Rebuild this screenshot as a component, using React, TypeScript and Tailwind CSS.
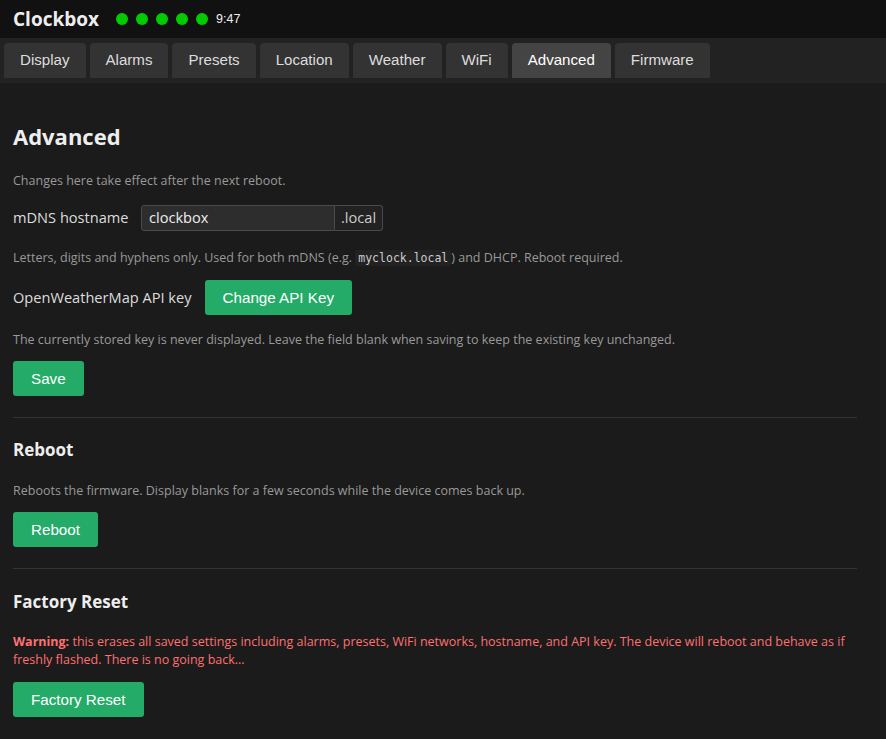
import React from "react";

const body = { fontFamily: '"Open Sans", "Noto Sans", sans-serif' };
const arial = { fontFamily: '"Liberation Sans", Arial, sans-serif' };

const tabs = ["Display", "Alarms", "Presets", "Location", "Weather", "WiFi", "Advanced", "Firmware"];

function Btn({ children }: { children: React.ReactNode }) {
  return (
    <button
      style={arial}
      className="h-[35px] px-[18px] rounded-[3px] bg-[#23ab67] text-white text-[15.2px] leading-none"
    >
      {children}
    </button>
  );
}

export default function App() {
  return (
    <div className="min-h-[739px] bg-[#1b1b1b] text-[#ddd]" style={body}>
      <div className="h-[38px] bg-[#111] flex items-center pl-[13px]">
        <span className="text-[19px] font-bold text-[#eee] mr-[17px]">Clockbox</span>
        <div className="flex gap-[8px]">
          {[0, 1, 2, 3, 4].map((i) => (
            <span key={i} className="w-[12px] h-[12px] rounded-full bg-[#00cc00]" />
          ))}
        </div>
        <span style={arial} className="ml-[8px] text-[12.5px] text-[#eee]">9:47</span>
      </div>
      <div className="h-[45px] bg-[#222] flex items-end pb-[5px] pl-[4px] gap-[4px]">
        {tabs.map((t) => (
          <div
            key={t}
            style={arial}
            className={`h-[35px] px-[16px] flex items-center rounded-t-[4px] text-[15.1px] text-[#ddd] ${
              t === "Advanced" ? "bg-[#444] text-white" : "bg-[#333]"
            }`}
          >
            {t}
          </div>
        ))}
      </div>
      <div className="px-[13px] w-[870px]">
        <h2 className="text-[22px] font-bold text-[#eee] mt-[38px] leading-[30px]">Advanced</h2>
        <p className="text-[12.5px] text-[#999] mt-[21px] leading-[18px]">Changes here take effect after the next reboot.</p>
        <div className="flex items-center mt-[15px]">
          <span className="text-[14.6px] text-[#ddd] w-[128px]">mDNS hostname</span>
          <div className="flex">
            <div className="w-[194px] h-[26px] bg-[#2d2d2d] border border-[#4a4a4a] rounded-l-[3px] px-[7px] flex items-center text-[14.6px] text-[#eee]">
              clockbox
            </div>
            <div className="h-[26px] bg-[#222] border border-[#4a4a4a] border-l-0 rounded-r-[3px] px-[6px] flex items-center text-[14.6px] text-[#ccc]">
              .local
            </div>
          </div>
        </div>
        <p className="text-[12.5px] text-[#999] mt-[18px] leading-[18px]">
          Letters, digits and hyphens only. Used for both mDNS (e.g.{" "}
          <code className="bg-[#222] text-[#ccc] px-[3px] py-[1px] rounded-[3px] text-[11.5px]" style={{ fontFamily: '"DejaVu Sans Mono", monospace' }}>
            myclock.local
          </code>
          ) and DHCP. Reboot required.
        </p>
        <div className="flex items-center mt-[13px]">
          <span className="text-[14.6px] text-[#ddd] mr-[13px]">OpenWeatherMap API key</span>
          <Btn>Change API Key</Btn>
        </div>
        <p className="text-[12.5px] text-[#999] mt-[16px] leading-[18px]">
          The currently stored key is never displayed. Leave the field blank when saving to keep the existing key unchanged.
        </p>
        <div className="mt-[12px]">
          <Btn>Save</Btn>
        </div>
        <hr className="border-0 border-t border-[#333] mt-[21px]" />
        <h3 className="text-[17px] font-bold text-[#eee] mt-[20px] leading-[24px]">Reboot</h3>
        <p className="text-[12.5px] text-[#999] mt-[20px] leading-[18px]">
          Reboots the firmware. Display blanks for a few seconds while the device comes back up.
        </p>
        <div className="mt-[12px]">
          <Btn>Reboot</Btn>
        </div>
        <hr className="border-0 border-t border-[#333] mt-[21px]" />
        <h3 className="text-[17px] font-bold text-[#eee] mt-[21px] leading-[24px]">Factory Reset</h3>
        <p className="text-[12.5px] text-[#ff7070] mt-[19px] leading-[18px]">
          <span className="font-bold">Warning:</span> this erases all saved settings including alarms, presets, WiFi networks, hostname, and API key. The device will reboot and behave as if freshly flashed. There is no going back...
        </p>
        <div className="mt-[13px]">
          <Btn>Factory Reset</Btn>
        </div>
      </div>
    </div>
  );
}
